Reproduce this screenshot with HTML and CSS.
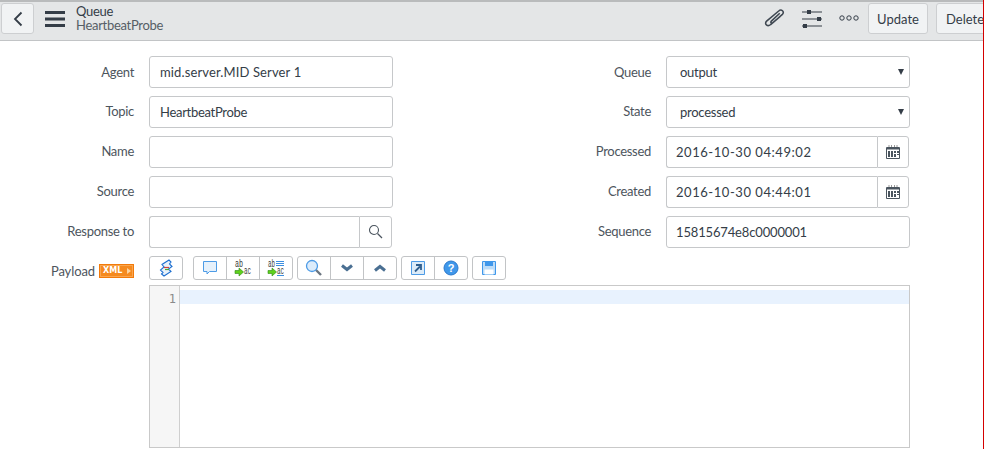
FILE: index.html
```html
<!DOCTYPE html>
<html lang="en">
<head>
<meta charset="utf-8">
<title>Queue - HeartbeatProbe</title>
<link rel="stylesheet" href="styles.css">
</head>
<body>
<div class="page">
  <header class="bar">
    <button class="btn back" aria-label="Back"><svg width="10" height="16" viewBox="0 0 10 16"><path d="M8.500 1.500 2 8l6.500 6.500" fill="none" stroke="#343d47" stroke-width="1.800"/></svg></button>
    <svg class="menu" width="20" height="16" viewBox="0 0 20 16"><path d="M0 1.500h20M0 8h20M0 14.500h20" stroke="#343d47" stroke-width="3"/></svg>
    <div class="title"><div class="t1">Queue</div><div class="t2">HeartbeatProbe</div></div>
    <div class="tools">
      <svg class="clip" width="21" height="19" viewBox="0 0 20 18"><path d="M15 5 7 12.500c-1.200 1.200.2 2.500 1.500 1.500L17.500 6c2.500-2.500-1-5.500-3.500-3.200L2.500 12.500c-2.800 2.800 1 5.800 3.800 3.200L15.500 8" fill="none" stroke="#3f4852" stroke-width="1.500"/></svg>
      <svg class="sliders" width="20" height="20" viewBox="0 0 20 20"><path d="M0 3h20M0 10h20M0 17h20" stroke="#343d47" stroke-width="1.200"/><path d="M5 1h4v4H5zM15 8h4v4h-4zM1 15h4v4H1z" fill="#343d47"/></svg>
      <svg class="dots" width="20" height="6" viewBox="0 0 20 6"><circle cx="3" cy="3" r="2.200" fill="none" stroke="#343d47"/><circle cx="10" cy="3" r="2.200" fill="none" stroke="#343d47"/><circle cx="17" cy="3" r="2.200" fill="none" stroke="#343d47"/></svg>
      <button class="btn act">Update</button>
      <button class="btn act del">Delete</button>
    </div>
  </header>

  <main class="form">
    <div class="grid">
      <div class="col">
        <div class="row"><label class="lab">Agent</label><input class="inp wide" value="mid.server.MID Server 1"></div>
        <div class="row"><label class="lab">Topic</label><input class="inp tight" value="HeartbeatProbe"></div>
        <div class="row"><label class="lab">Name</label><input class="inp"></div>
        <div class="row"><label class="lab">Source</label><input class="inp"></div>
        <div class="row"><label class="lab">Response to</label>
          <div class="group"><input class="inp joined"><span class="addon big"><svg width="16" height="16" viewBox="0 0 16 16"><circle cx="6" cy="6" r="4.500" fill="none" stroke="#4a545e" stroke-width="1.100"/><path d="m9.500 9.500 4.500 4.500" stroke="#4a545e" stroke-width="1.300"/></svg></span></div>
        </div>
      </div>
      <div class="col">
        <div class="row"><label class="lab">Queue</label><div class="sel">output<span class="caret"></span></div></div>
        <div class="row"><label class="lab">State</label><div class="sel">processed<span class="caret"></span></div></div>
        <div class="row"><label class="lab">Processed</label>
          <div class="group"><input class="inp joined date" value="2016-10-30 04:49:02"><span class="addon"><svg width="14" height="14" viewBox="0 0 14 14"><path d="M3 0v2M5.500 0v2M8.500 0v2M11 0v2" stroke="#999"/><path d="M.5 2.500h13v11H.5z" fill="#fff" stroke="#4a545e"/><path d="M.5 3h13v1.500H.5z" fill="#4a545e"/><path d="M2 6h2v6H2zM5 6h2v6H5zM8 6h2v2H8zM11 6h2v2h-2zM8 9h2v3H8zM11 9h2v1h-2z" fill="#4a545e"/></svg></span></div>
        </div>
        <div class="row"><label class="lab">Created</label>
          <div class="group"><input class="inp joined date" value="2016-10-30 04:44:01"><span class="addon"><svg width="14" height="14" viewBox="0 0 14 14"><path d="M3 0v2M5.500 0v2M8.500 0v2M11 0v2" stroke="#999"/><path d="M.5 2.500h13v11H.5z" fill="#fff" stroke="#4a545e"/><path d="M.5 3h13v1.500H.5z" fill="#4a545e"/><path d="M2 6h2v6H2zM5 6h2v6H5zM8 6h2v2H8zM11 6h2v2h-2zM8 9h2v3H8zM11 9h2v1h-2z" fill="#4a545e"/></svg></span></div>
        </div>
        <div class="row"><label class="lab">Sequence</label><input class="inp seq" value="15815674e8c0000001"></div>
      </div>
    </div>

    <div class="payload">
      <div class="plabel"><span class="lab-p">Payload</span><span class="xml">XML<i class="xarrow"></i></span></div>
      <div class="editor">
        <div class="toolbar">
          <div class="tgroup"><span class="tb">
            <svg width="14" height="18" viewBox="0 0 14 18"><path d="M10 1 3 5.500l2 2.500-3.500 3L4 13.500 2.500 15 5 17l7-4.500-2.500-2.500L13 7.500 10.500 5 12 3z" fill="#e8f1fb" stroke="#1d6fd0" stroke-width="1.100"/><path d="M5 8.500h5" stroke="#d0433a" stroke-width="1.200"/><path d="M6 10.500h4" stroke="#45a83a" stroke-width="1.200"/></svg></span></div>
          <div class="tgroup">
            <span class="tb"><svg width="16" height="16" viewBox="0 0 16 16"><path d="M1.500 1.500h13v10H7.500L5 14v-2.500H1.500z" fill="#e6f1fb" stroke="#4d9be6"/></svg></span>
            <span class="tb"><svg width="20" height="20" viewBox="0 0 20 20"><text x="2" y="9" class="gl" textLength="8" lengthAdjust="spacingAndGlyphs">ab</text><text x="11" y="16" class="gl" textLength="7" lengthAdjust="spacingAndGlyphs">ac</text><path d="M2 12.500h4V10l4.500 4L6 18v-2.500H2z" fill="#5fd01c" stroke="#2c8a10" stroke-width=".6"/></svg></span>
            <span class="tb"><svg width="20" height="20" viewBox="0 0 20 20"><text x="2" y="9" class="gl" textLength="7" lengthAdjust="spacingAndGlyphs">ab</text><text x="11" y="16" class="gl" textLength="7" lengthAdjust="spacingAndGlyphs">ac</text><path d="M10 3.500h8M10 5.500h8M10 7.500h8M11 17.500h7" stroke="#3d8fe0"/><path d="M2 12.500h4V10l4.500 4L6 18v-2.500H2z" fill="#5fd01c" stroke="#2c8a10" stroke-width=".6"/></svg></span>
          </div>
          <div class="tgroup">
            <span class="tb"><svg width="18" height="18" viewBox="0 0 18 18"><path d="m10 10 6 6" stroke="#6b7580" stroke-width="2.400"/><circle cx="7" cy="7" r="5.500" fill="#dcecfb" stroke="#4d9be6" stroke-width="1.300"/></svg></span>
            <span class="tb"><svg width="14" height="10" viewBox="0 0 14 10"><path d="M2 2.500 7 6.500l5-4" fill="none" stroke="#4a6f92" stroke-width="3"/></svg></span>
            <span class="tb"><svg width="14" height="10" viewBox="0 0 14 10"><path d="M2 7.500 7 3.500l5 4" fill="none" stroke="#4a6f92" stroke-width="3"/></svg></span>
          </div>
          <div class="tgroup">
            <span class="tb"><svg width="14" height="14" viewBox="0 0 14 14"><path d="M.5.5h13v13H.5z" fill="#dcebf8" stroke="#4d9be6"/><path d="M4 10.500 9 5.500M5 4h5v5" fill="none" stroke="#2f5f8f" stroke-width="1.800"/></svg></span>
            <span class="tb"><svg width="16" height="16" viewBox="0 0 16 16"><circle cx="8" cy="8" r="7" fill="#3f97ea" stroke="#2a78cc"/><text x="8" y="12" text-anchor="middle" class="q">?</text></svg></span>
          </div>
          <div class="tgroup">
            <span class="tb"><svg width="14" height="14" viewBox="0 0 14 14"><path d="M.5.5h13v13H.5z" fill="#bcdcf8" stroke="#3f97ea"/><path d="M3 1h8v4H3z" fill="#3f97ea"/><path d="M2.500 8.500h9v5h-9z" fill="#fff"/></svg></span>
          </div>
        </div>
        <div class="code">
          <div class="gutter"><span class="ln">1</span></div>
          <div class="lines"><div class="active"></div></div>
        </div>
      </div>
    </div>
  </main>
</div>
</body>
</html>
```
FILE: styles.css
```css
* { box-sizing: border-box; }
html, body { margin: 0; padding: 0; }
body {
  width: 984px;
  height: 449px;
  overflow: hidden;
  background: #fff;
  font-family: "Lato", "Noto Sans", sans-serif;
  font-size: 13px;
  color: #343d47;
}
.page { height: 449px; border-right: 1px solid #d40000; overflow: hidden; }
.bar {
  height: 41px;
  display: flex;
  align-items: flex-start;
  background: #e4e6e7;
  border-top: 2px solid #b9bbbc;
  border-bottom: 1px solid #c2c4c6;
  padding: 1px 0 0 1px;
}
.btn {
  font: inherit;
  color: #343d47;
  height: 31px;
  background: #f1f3f4;
  border: 1px solid #cdcfd1;
  border-radius: 3px;
  padding: 0;
  display: flex;
  align-items: center;
  justify-content: center;
}
.back { width: 33px; flex: none; }
.menu { margin: 8px 0 0 11px; flex: none; }
.title { margin-left: 11px; line-height: 14px; padding-top: 1px; white-space: nowrap; letter-spacing: -.3px; }
.t1 { color: #343d47; }
.t2 { color: #565e66; }
.tools { margin-left: auto; display: flex; align-items: flex-start; flex: none; width: 219px; }
.clip { margin: 5px 0 0 0; flex: none; }
.sliders { margin: 6px 0 0 17px; flex: none; }
.dots { margin: 12px 0 0 17px; flex: none; }
.act { width: 60px; margin-left: 9px; flex: none; }
.del { margin-left: 8px; justify-content: flex-start; padding-left: 9px; }

.form { padding: 15px 0 0 0; }
.grid { display: grid; grid-template-columns: 517px 1fr; }
.row { display: flex; align-items: center; height: 32px; margin-bottom: 8px; }
.lab { width: 134px; text-align: right; margin-right: 15px; color: #4d555d; flex: none; letter-spacing: -.3px; }
.row + .row .lab { padding-bottom: 2px; }
.inp {
  font: inherit;
  color: #343d47;
  width: 244px;
  height: 32px;
  border: 1px solid #c6c8ca;
  border-radius: 3px;
  padding: 0 9px;
  background: #fff;
  outline: none;
}
.wide { letter-spacing: .13px; padding-left: 10px; }
.tight { letter-spacing: -.3px; padding-left: 10px; }
.date { letter-spacing: .55px; }
.seq { letter-spacing: -.15px; }
.sel {
  width: 244px;
  height: 32px;
  border: 1px solid #c6c8ca;
  border-radius: 3px;
  padding: 0 13px;
  display: flex;
  align-items: center;
  justify-content: space-between;
  letter-spacing: -.25px;
}
.caret { border-left: 3.5px solid transparent; border-right: 3.5px solid transparent; border-top: 6px solid #343d47; margin-right: -8px; }
.group { display: flex; width: 243px; height: 32px; }
.grid .col .joined { flex: 1; width: auto; min-width: 0; border-radius: 3px 0 0 3px; border-right: 0; }
.addon {
  width: 32px;
  flex: none;
  border: 1px solid #c6c8ca;
  border-radius: 0 3px 3px 0;
  display: flex;
  align-items: center;
  justify-content: center;
}
.addon.big { width: 33px; }
.payload { display: flex; }
.plabel { width: 134px; margin-right: 15px; flex: none; display: flex; justify-content: flex-end; align-items: center; height: 30px; }
.lab-p { color: #4d555d; margin-right: 4px; letter-spacing: -.1px; }
.xml {
  width: 35px;
  height: 14px;
  background: #f58a1f;
  border: 1px solid #f27a0a;
  box-shadow: inset 0 0 0 1px #f9a650;
  color: #fff;
  font: bold 8px/12px "DejaVu Sans", sans-serif;
  padding-left: 3px;
  display: flex;
  align-items: center;
  justify-content: space-between;
}
.xarrow { border-left: 4px solid #fcd3a0; border-top: 3px solid transparent; border-bottom: 3px solid transparent; margin-right: 2px; }
.editor { width: 761px; flex: none; }
.toolbar { display: flex; gap: 4px; height: 24px; margin-bottom: 5px; }
.tgroup { display: flex; height: 24px; border: 1px solid #c2c4c6; border-radius: 3px; }
.tgroup:first-child { margin-right: 6px; }
.tb { width: 33px; display: flex; align-items: center; justify-content: center; border-left: 1px solid #c2c4c6; height: 22px; }
.tb:first-child { border-left: 0; width: 32px; }
.gl { font: 10px "Liberation Mono", monospace; fill: #333; }
.q { font: bold 11px "Liberation Sans", sans-serif; fill: #fff; }
.code { display: flex; height: 163px; border: 1px solid #c9c9c9; }
.gutter { width: 30px; background: #f6f6f6; border-right: 1px solid #cfcfcf; text-align: right; padding: 4px 3px 0 0; }
.ln { font: 12px/14px "DejaVu Sans Mono", monospace; color: #8a8a8a; }
.lines { flex: 1; padding-top: 4px; }
.active { height: 14px; background: #e8f2fe; }
```
